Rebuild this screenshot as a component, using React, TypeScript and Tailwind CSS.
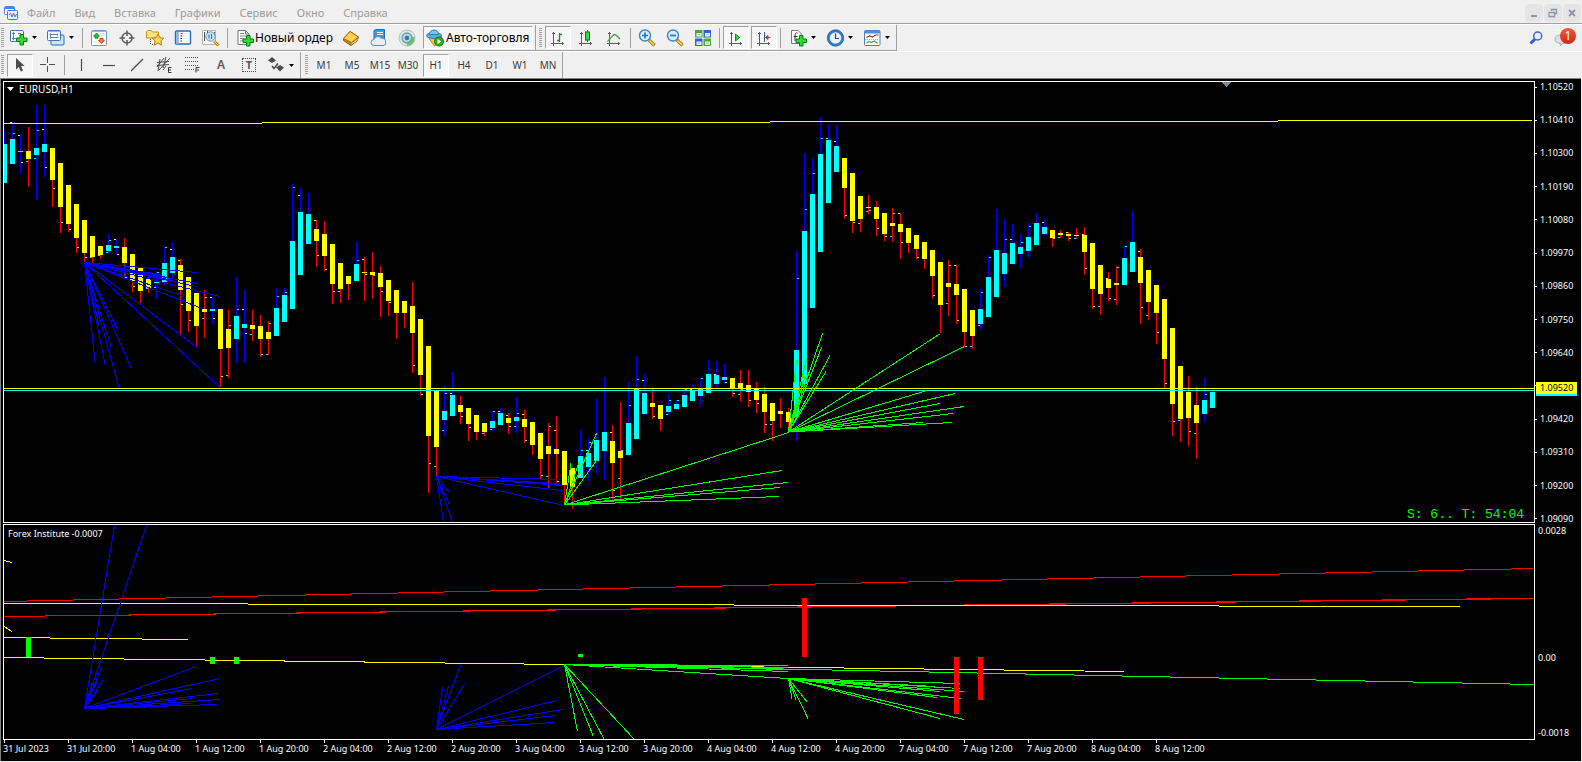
import type { ReactNode } from "react";

const UP = "#00ffff";
const DOWN = "#ffff00";
const BLUE = "#0000ff";
const RED = "#ff0000";
const LIME = "#00ff00";

// Candles, eight units apart: direction, wick top, wick bottom, body top, body bottom
const CANDLES = `
C130,183,144,183 C122,164,139,164 C134,174,151,152 Y127,187,151,159 C105,200,148,155 C105,177,144,152
Y148,207,148,180 Y163,233,163,207 Y185,232,185,224 Y204,253,204,238 Y220,262,220,253 Y236,263,236,257
Y246,259,246,255 C234,253,245,251 C239,255,246,248 Y238,278,247,263 Y254,292,254,281 Y268,303,268,291
Y277,293,279,288 C271,299,282,283 C247,285,263,282 C242,279,257,273 Y259,334,265,290 Y277,332,277,311
Y293,348,293,326 Y290,338,309,312 C297,324,309,311 Y309,387,309,349 Y310,378,329,348 C277,363,316,339
C290,363,324,328 Y310,341,325,329 Y315,357,326,339 Y321,355,332,339 C288,336,308,336 C288,322,295,322
C184,309,241,309 C188,275,212,275 C193,244,214,244 Y220,267,229,241 Y221,271,234,256 Y244,304,244,284
Y263,303,263,289 Y276,300,276,284 C242,281,264,281 Y257,301,272,273 Y252,299,272,275 Y266,317,273,287
Y280,316,280,301 Y290,339,290,313 Y301,328,301,313 Y282,373,306,333 Y319,396,319,375 Y346,493,346,436
Y391,476,391,447 C386,436,411,420 C372,416,395,416 Y396,424,405,412 Y408,441,408,424 Y415,440,415,432
Y423,436,423,432 C411,431,421,428 C408,425,413,425 Y413,434,418,423 C397,433,417,421 Y410,443,419,427
Y422,455,422,445 Y433,479,433,459 Y423,489,446,454 Y416,483,449,454 Y451,505,451,485 Y468,509,468,487
C430,478,456,478 C438,482,453,467 C399,474,440,461 C377,480,432,451 Y425,500,441,463 Y402,499,451,458
C382,456,423,455 C356,439,389,439 C374,415,393,414 Y389,419,403,407 Y405,431,405,419 C394,415,406,412
C400,410,404,409 C389,407,395,407 C384,401,390,401 C378,406,389,396 C360,393,374,393 C361,388,375,384
C364,384,377,380 Y378,397,378,389 Y370,402,383,389 Y370,407,385,392 Y382,413,388,400 Y387,433,394,412
Y403,441,403,421 Y398,428,411,414 Y408,429,412,422 C251,441,350,417 C153,384,231,384 C158,308,194,308
C117,252,154,252 C125,203,140,203 C125,172,146,172 Y158,219,158,188 Y173,233,173,221 Y196,232,196,219
Y195,214,207,208 Y201,236,207,219 Y213,241,213,234 Y208,242,223,226 Y213,259,224,232 Y228,253,228,243
Y235,259,235,249 Y242,269,242,259 Y250,299,250,276 Y262,333,262,305 Y260,316,283,287 Y265,324,284,295
Y289,347,289,332 Y310,349,310,336 C289,330,309,324 C255,317,277,317 C209,297,250,297 C219,287,253,274
C224,264,243,264 C234,268,247,254 C223,258,237,251 C213,245,223,245 C219,236,227,234 Y230,247,230,238
Y230,238,233,235 Y232,241,234,236 Y228,239,235,236 Y227,275,235,252 Y243,309,243,289 Y265,315,265,294
Y272,301,279,288 Y266,305,283,285 C246,285,258,285 C211,272,242,272 Y249,324,257,283 Y270,320,270,302
Y285,344,285,313 Y299,388,299,359 Y328,436,328,404 Y366,442,366,419 Y376,446,392,418 Y387,459,405,423
C378,422,400,414 C389,408,392,408`
  .trim()
  .split(/\s+/)
  .map((s) => ({ up: s[0] === "C", v: s.slice(1).split(",").map(Number) }));

// Open and close ticks: candle index, side, colour, height
const TICKS = `
1RC133 1LY122 2LY135 2RY162 3LC161 4RC130 4LC158 5LY129 5RY167 6RY188 7RY222 8RY229 9RY247 10RY257 11LC257
12LC255 13RC240 13LC252 14LY239 14RY254 15RY277 16RY286 18LC288 19RC272 19LC287 20RC247 21LY249 22LY260
22RY304 23RY320 25RC297 25LC318 26LY297 26RY318 27RY376 28RC325 28LC375 29RC309 30LY309 30RY333 31LC334
32RY354 33RC323 33LC354 34RC296 35RC292 36RC187 37LY195 39LY220 39RY255 40RY269 41RY291 42LC291 44RC260
45LY259 45RY274 46RC275 47RY291 48RY302 51RY365 52RY394 53RY463 54LC466 55RC393 55LC430 56LY393 57RY416
58RY427 60LC433 61RC411 61LC429 62LY411 63LY415 63RY426 64RC413 64LC426 65LY414 65RY440 67RY475 68RC426
68LC476 69LY430 69RY481 72RC450 73LC450 73RC442 76LY432 76RY490 77RC450 77LC478 78RC405 79RC379 80LY380
81RY416 83RC400 83LC414 84RC400 85RC389 86LY389 87RC378 89LY374 90RY382 91RY393 92LC394 92RC389 93RY400
94RY403 95RY424 96LC424 99RC278 100RC209 101RC173 102RC138 103LY138 104LY141 105RY215 106RY222 107LC223
108LC211 108RC210 109RY228 110RY236 111RC213 111LC236 112LY213 112RY242 114RY257 116RY295 118RC265
118LC303 119LY265 119RY320 120RY346 121LC346 122RC292 122LC325 123RC257 125RC239 126LY239 127RC242
128RC226 130LY222 131RY238 132LC237 133LY232 133RY238 134LC238 135LY234 135RY268 136RY306 137LC306
138LY278 138RY298 139RC267 139LC299 140RC246 142LY251 142RY307 143LC315 144RY332 145RY383 146RY421
147LC420 148RY431 149LC433 150RC394`
  .trim()
  .split(/\s+/)
  .map((s) => /^(\d+)([LR])([CY])(\d+)$/.exec(s)!)
  .map((m) => ({ i: +m[1], right: m[2] === "R", up: m[3] === "C", y: +m[4] }));

function Fan({ from, to, color }: { from: [number, number]; to: string; color: string }) {
  const d = to
    .trim()
    .split(/\s+/)
    .map((p) => `M${from[0]} ${from[1]}L${p.replace(",", " ")}`)
    .join("");
  return <path d={d} stroke={color} fill="none" />;
}

function PriceChart() {
  return (
    <svg className="absolute inset-0 h-full w-full" viewBox="4 82 1530 440" preserveAspectRatio="none" shapeRendering="crispEdges" role="img" aria-label="EURUSD H1">
      <path d="M1221 82h10l-5 5z" fill="#778899" />
      {CANDLES.map(({ up, v }, i) => (
        <g key={i}>
          <rect x={4 + i * 8} y={v[0]} width={1} height={v[1] - v[0]} fill={up ? BLUE : RED} />
          <rect x={2 + i * 8} y={v[2]} width={5} height={v[3] - v[2]} fill={up ? UP : DOWN} />
        </g>
      ))}
      {TICKS.map((t, i) => (
        <rect key={i} x={t.i * 8 + (t.right ? 5 : 2)} y={t.y} width={2} height={1} fill={t.up ? UP : DOWN} />
      ))}
      <path d="M4 123.510L1532 120.510" stroke={DOWN} />
      <path d="M4 388.5H1534" stroke={DOWN} />
      <path d="M4 390.5H1534" stroke={UP} />
      <Fan color={BLUE} from={[84.5, 262.5]} to="197,272.5 198,283.5 196,286.5 220,296.5 184,296.5 202,308.5 197,347.5 220,387.5 95,361.5 105,363.5 119,387.5 131,367.5 117.5,329.5 111,346.5 91.5,328.5 99,325.5 165,276.5 173,280.5 160,274.5" />
      <Fan color={BLUE} from={[436.5, 476.5]} to="561,479.5 557,483.5 561,484.5 563,485.5 562,490.5 564,505.5 449.5,492.5 449.5,504.5 443.5,522 452.5,522" />
      <Fan color={LIME} from={[564.5, 505]} to="571,463.5 579,462.5 596.5,433.5 598,458.5 789,432.5 782,470.5 788,482.5 780,487.5 779,496.5" />
      <Fan color={LIME} from={[788.5, 432]} to="822.5,333.5 821.5,347.5 830,355.5 826,371.5 796.5,360.5 806.5,359.5 805,376.5 795,373.5 940.5,333.5 964.5,346.5 927,390.5 955,393.5 940,403.5 964,406.5 953,413.5 952,422.5 923,422.5" />
    </svg>
  );
}

function IndicatorChart() {
  return (
    <svg className="absolute inset-0 h-full w-full" viewBox="4 525 1530 214" preserveAspectRatio="none" shapeRendering="crispEdges" role="img" aria-label="Forex Institute">
      <path d="M4 601.5L1534 568.5M4 616.5L1534 598.2M4 616.5L1534 598.5" stroke={RED} />
      <path d="M4 603.5L1460 606.5M4 637.5L188 639.5M4 657.5L1124 671.5M4 560.5L12 562.5M4 626.5L12 631.5" stroke={DOWN} />
      <Fan color={LIME} from={[564.5, 664.5]} to="1534,684.5 788,665.5 788,667.5 788,669.5 788,671.5 788,678.5 577.5,731.5 593,735.5 604,739 634,739" />
      <Fan color={LIME} from={[788.5, 678.5]} to="960,683.5 960,688.5 964,691.5 935,686.5 940,691.5 961,698.5 937,697.5 940,718.5 964,719.5 792,698.5 796,699.5 807.5,702.5 808,718.5" />
      <Fan color={BLUE} from={[84.5, 708.5]} to="114.5,525.5 146.5,525.5 101.5,667.5 103,680.5 98,679.5 97,691.5 92,683.5 196,666.5 220,678.5 192,688.5 218,693.5 220,699.5 217,704.5 192,698.5 192,703.5 168,706.5" />
      <Fan color={BLUE} from={[436.5, 729.5]} to="460.5,665.5 464.5,683.5 448.5,686.5 442.5,687.5 564,665.5 557,700.5 563,709.5 555,715.5 554,722.5" />
      <path d="M26 637h5v20h-5zM210 657h5v7h-5zM234 657h5v7h-5zM578 654h5v3h-5z" fill={LIME} />
      <path d="M802 598h5v59h-5zM954 657h5v57h-5zM978 657h5v43h-5z" fill={RED} />
    </svg>
  );
}

function Icon({ children, w = 18 }: { children: ReactNode; w?: number }) {
  return (
    <svg width={w} height={18} viewBox={`0 0 ${w} 18`} fill="none" className="shrink-0" aria-hidden="true">
      {children}
    </svg>
  );
}

const Plus = ({ x, y }: { x: number; y: number }) => (
  <path transform={`translate(${x} ${y})`} d="M4 .5h3.500v3.500h3.500v3.500h-3.500v3.500h-3.500v-3.500h-3.500v-3.500h3.500z" fill="#2fdc2f" stroke="#0a7a1c" />
);

const AppIcon = () => (
  <svg width={14} height={14} viewBox="0 0 14 14" fill="none" aria-hidden="true">
    <rect x=".5" y=".5" width="10" height="8" rx="1" fill="#fff" stroke="#4a86e0" />
    <path d="M1 2h9" stroke="#4a86e0" strokeWidth="2" />
    <rect x="3.500" y="4.500" width="10" height="9" rx="1" fill="#eaf3ff" stroke="#3e7be0" />
    <path d="M5 9l1.500-2 1.500 4 1.500-4 1.500 4 1.500-3" stroke="#3e7be0" />
  </svg>
);

const NewChart = () => (
  <Icon>
    <rect x=".5" y="1.500" width="13" height="11" rx="1" fill="#f4f9ff" stroke="#3a78b8" />
    <path d="M3.500 3v8M2 4.500h3M2 9.500h6M8 4.500h3" stroke="#5a84ad" />
    <Plus x={6} y={5} />
  </Icon>
);
const Profiles = () => (
  <Icon>
    <rect x="4" y="6" width="13" height="10" rx="1" fill="#cfe3f5" stroke="#2f6fb0" />
    <rect x=".5" y="1.500" width="13" height="10" rx="1" fill="#f4f9ff" stroke="#3a78b8" />
    <path d="M1 2.500h12" stroke="#8dbbe4" />
    <path d="M3.500 4.500v5M2.500 5.500h8M3.500 8.500h8M10.500 4.500v2" stroke="#5a84ad" />
  </Icon>
);
const MarketWatch = () => (
  <Icon>
    <rect x="1.500" y="1.500" width="15" height="15" rx="1" fill="#fff" stroke="#5b9bd2" />
    <path d="M1.500 2.500h15" stroke="#8dbbe4" />
    <path d="M6.500 4l3 3.200H8v2H5v-2H3.500z" fill="#2ebc2e" stroke="#177e17" strokeWidth=".8" />
    <path d="M11.500 14.500l-3-3.200H10v-2h3v2h1.500z" fill="#f47a4a" stroke="#b8320c" strokeWidth=".8" />
    <path d="M11 4.500h4M11 6.500h4M3 13h4" stroke="#d5dfea" />
  </Icon>
);
const Cross = () => (
  <Icon>
    <circle cx="9" cy="9" r="5" stroke="#5a5a5a" strokeWidth="1.500" />
    <path d="M9 1.500v5.500M9 11v5.500M1.500 9h5.500M11 9h5.500" stroke="#5a5a5a" strokeWidth="1.500" />
  </Icon>
);
const Navigator = () => (
  <Icon>
    <path d="M.5 9V2.500L1.500 1.500h4l1 1.500h6v6z" fill="#fbe384" stroke="#c9961c" />
    <path d="M4.500 10v6M6 15.500h2" stroke="#555" strokeDasharray="1 1" />
    <path d="M12 5l1.800 3.700 4 .5-2.900 2.800.8 4.200-3.700-2.100-3.700 2.100.8-4.200-2.900-2.800 4-.5z" fill="#fcd94c" stroke="#b98113" />
  </Icon>
);
const Terminal = () => (
  <Icon>
    <rect x="1.500" y="2" width="15" height="13" rx="1" fill="#fff" stroke="#2a6ab4" strokeWidth="1.400" />
    <path d="M3.500 3v12" stroke="#7fb2e4" strokeWidth="2.500" />
    <path d="M6.500 4.500h2" stroke="#d03020" />
    <path d="M6.500 7h1.500M6.500 9.500h1.500M6.500 12h1.500" stroke="#222" />
    <path d="M9 4.500h6M9 7h6M9 9.500h6M9 12h6" stroke="#dfeaf8" />
  </Icon>
);
const Tester = () => (
  <Icon>
    <path d="M.5 1.500h13v14H.5z" fill="#fff" stroke="#b5b5b5" />
    <path d="M2.500 3v9M12.500 3v3M5.500 2v3" stroke="#555" />
    <circle cx="8.500" cy="7.500" r="4.700" fill="#b9dbf6" fillOpacity=".85" stroke="#6b9cc4" />
    <path d="M7 5.500v4M9.500 5v5" stroke="#3f76a6" />
    <path d="M12 12l4.500 4.500" stroke="#c8860d" strokeWidth="3" />
    <path d="M12 12l4 4" stroke="#ffdf6b" />
  </Icon>
);
const NewOrder = () => (
  <Icon>
    <path d="M1 1.500h7.500L12 5v10.500H1z" fill="#fff" stroke="#777" />
    <path d="M8.500 1.500V5H12" stroke="#777" />
    <path d="M3 4.500h4M3 7h6M3 9.500h4M3 12h3" stroke="#888" />
    <Plus x={5.500} y={6} />
  </Icon>
);
const Book = () => (
  <Icon>
    <path d="M1.500 9.500l6.500-7 8.500 5.500-1.500 4-6 4.500-7.500-5z" fill="#c58418" stroke="#8a5a0c" />
    <path d="M1.500 9.500L8 2.500l8.500 5.500-7 5.500z" fill="#fbd055" stroke="#a46e10" />
    <path d="M9.500 15l6-4.500" stroke="#fff0b0" />
  </Icon>
);
const Vps = () => (
  <Icon>
    <path d="M4 1.500l2-1h8.500V10H4z" fill="#2ba1f2" stroke="#1273c4" />
    <path d="M7 3.500h6M7 5.500h6" stroke="#e8f6ff" strokeWidth="1.200" />
    <path d="M4 16.500a3 3 0 0 1 0-6 4 4 0 0 1 7.200-1.200 3.300 3.300 0 0 1 4.300 4 2.300 2.300 0 0 1-1.500 3.200z" fill="#e6eef8" stroke="#6a86b0" />
  </Icon>
);
const Signals = () => (
  <Icon>
    <circle cx="9" cy="9" r="8" fill="#dbe8e6" stroke="#a9c8c4" />
    <circle cx="9" cy="9" r="5" fill="#b4d5d8" stroke="#6f9fb5" strokeWidth="1.300" />
    <path d="M9 9v8c4.500 0 8-3.500 7.500-9l-3.500 0c0 3-1 4.500-4 5z" fill="#5fb25f" fillOpacity=".8" />
    <circle cx="9" cy="9" r="2.200" fill="#2b76b8" />
  </Icon>
);
const AutoTrade = () => (
  <Icon>
    <path d="M2 8l6.500 9 7.500-7-1-4z" fill="#f4c93e" stroke="#b5870e" />
    <ellipse cx="8" cy="6.500" rx="7.500" ry="3" fill="#58aede" stroke="#2b7fb0" />
    <path d="M3.500 5.500c0-6 9-6 9 0z" fill="#7cc4ec" stroke="#2b7fb0" />
    <circle cx="13" cy="12.500" r="4.500" fill="#22b422" stroke="#0e7d0e" />
    <path d="M11.500 10l4 2.500-4 2.500z" fill="#fff" />
  </Icon>
);

const Axes = () => (
  <g stroke="#5c5c5c" shapeRendering="crispEdges">
    <path d="M4.500 3v14M2 14.500h13" />
    <path d="M3 4.500h3M13.500 13v3" />
  </g>
);
const BarsIcon = () => (
  <Icon>
    <Axes />
    <path d="M10.500 4v9M8 11.500h2.500M10.500 5.500H13" stroke="#1c8a2a" strokeWidth="1.300" />
  </Icon>
);
const CandlesIcon = () => (
  <Icon>
    <Axes />
    <path d="M10.500 1v12" stroke="#16721f" />
    <rect x="8.500" y="3" width="4" height="8" fill="#3bd83b" stroke="#16721f" />
  </Icon>
);
const LineIcon = () => (
  <Icon>
    <Axes />
    <path d="M2.500 12.500C6 9 8 5.500 9.500 5.500S13 8 15 10" stroke="#4ba04f" strokeWidth="1.300" />
  </Icon>
);
const Magnifier = ({ plus }: { plus?: boolean }) => (
  <Icon>
    <path d="M11 11l5.500 5.500" stroke="#b0780c" strokeWidth="3.400" />
    <path d="M11.500 11.500l4.500 4.500" stroke="#fbd95c" strokeWidth="1.600" />
    <circle cx="7" cy="6.500" r="5.500" fill="#d5edfd" stroke="#3c86c4" strokeWidth="1.400" />
    <path d={plus ? "M4 6.500h6M7 3.500v6" : "M4 6.500h6"} stroke="#2b77b8" strokeWidth="1.700" />
  </Icon>
);
const Tile = () => (
  <Icon>
    <path d="M1 1h7.500v7.500H1z" fill="#4fa82b" />
    <path d="M9.500 1H17v7.500H9.500z" fill="#2e63d6" />
    <path d="M1 9.500h7.500V17H1z" fill="#2e63d6" />
    <path d="M9.500 9.500H17V17H9.500z" fill="#4fa82b" />
    <path d="M2.500 4h5v3.500h-5zM11 4h5v3.500h-5zM2.500 12.500h5V16h-5zM11 12.500h5V16h-5z" fill="#f2f8ff" />
    <path d="M3.500 5.500h3M12 5.500h3M3.500 14h3M12 14h3" stroke="#9cb8dc" />
  </Icon>
);
const ScrollIcon = () => (
  <Icon>
    <Axes />
    <path d="M8.500 5v7l4-3.500z" fill="#3bd83b" stroke="#16862a" />
  </Icon>
);
const ShiftIcon = () => (
  <Icon>
    <Axes />
    <path d="M9.500 3v10" stroke="#2f63a8" />
    <path d="M10.500 8.500l2.500-2v4zM12 8.500h3.500" fill="#c8431a" stroke="#c8431a" />
  </Icon>
);
const Indicators = () => (
  <Icon>
    <path d="M2.500 1.500H9l3 3v10H2.500z" fill="#fff" stroke="#777" />
    <path d="M8.500 4c-2-.8-2.500 1-2.500 3v5M4.500 7.500h4" stroke="#333" />
    <Plus x={6.500} y={6} />
  </Icon>
);
const Clock = () => (
  <Icon>
    <circle cx="9.500" cy="9" r="7" fill="#e9f3fc" stroke="#2a7cd6" strokeWidth="2.400" />
    <circle cx="9.500" cy="9" r="8.200" stroke="#1a4f92" strokeWidth=".7" />
    <path d="M9.500 4.500V9.500H13" stroke="#444" strokeWidth="1.200" />
  </Icon>
);
const Template = () => (
  <Icon>
    <rect x="1.500" y="1.500" width="15.500" height="15" rx="1" fill="#fff" stroke="#4a80be" />
    <path d="M1.500 3h15.500" stroke="#4a90dc" strokeWidth="3" />
    <path d="M3.500 8.500l3-1.500 3 1 3-2h3" stroke="#8c3a2a" strokeWidth="1.200" />
    <path d="M2 10.500h14" stroke="#9ab4d4" strokeDasharray="1 1" />
    <path d="M3.500 14l3-1.500 2 1 3-1.500 3 2.500" stroke="#4ba04f" strokeWidth="1.200" />
  </Icon>
);

const Pointer = () => (
  <Icon>
    <path d="M5 2v11.500l2.800-2.500 2 4.500 2.200-1-2-4.400h3.600z" fill="#4b4b4b" />
  </Icon>
);
const Crosshair = () => (
  <Icon>
    <path d="M8.500 1v6M8.500 10v6M1 8.500h6M10 8.500h6" stroke="#505050" shapeRendering="crispEdges" />
  </Icon>
);
const Stroke = ({ d }: { d: string }) => (
  <Icon>
    <path d={d} stroke="#4b4b4b" strokeWidth="1.200" />
  </Icon>
);
const Channel = () => (
  <Icon>
    <path d="M1 11L8 2M3 14l11-12M7 14l3-4M1 6.500l12-1M1 9.500l12-1M4 3l-2 12M10 1L7 12" stroke="#4b4b4b" />
    <path d="M15.500 11.500h-3v5h3M12.500 14h2.500" stroke="#333" />
  </Icon>
);
const Fib = () => (
  <Icon>
    <path d="M1 1.500h14M1 5.500h14M1 9.500h14M1 13.500h9" stroke="#4b4b4b" strokeDasharray="1 1" />
    <path d="M15.500 11.500h-3.500v5M12.500 14h2.500" stroke="#333" />
  </Icon>
);
const Shapes = () => (
  <Icon>
    <path d="M5 1l4 3.500-4 2.500-4-2.500zM13 9l4 2.500-4 4-4-4z" fill="#4b4b4b" />
    <path d="M5 10l2 2.500 4-5" stroke="#4b4b4b" strokeWidth="1.500" />
  </Icon>
);

const PRESSED =
  "border-t-[#a0a0a0] border-l-[#a0a0a0] border-r-white border-b-white bg-[#f7f7f7]";

function Tool({ label, children, pressed = false }: { label: string; children: ReactNode; pressed?: boolean }) {
  return (
    <button
      type="button"
      aria-label={label}
      aria-pressed={pressed}
      className={`mx-px flex h-[23px] w-[26px] shrink-0 items-center justify-center border ${pressed ? PRESSED : "border-transparent"}`}
    >
      {children}
    </button>
  );
}

function MenuTool({ label, children }: { label: string; children: ReactNode }) {
  return (
    <button type="button" aria-label={label} aria-haspopup="menu" className="flex h-[23px] w-[37px] shrink-0 items-center gap-1 pl-1">
      {children}
      <svg width="5" height="3" viewBox="0 0 5 3" aria-hidden="true">
        <path d="M0 0h5L2.500 3z" fill="#000" />
      </svg>
    </button>
  );
}

const Sep = () => <div className="mx-[2px] h-5 w-px shrink-0 bg-[#a0a0a0]" />;
const End = () => <div className="h-full w-px shrink-0 bg-[#a0a0a0]" />;
const Grip = () => (
  <div className="mx-[2px] ml-px h-5 w-[3px] shrink-0 bg-[repeating-linear-gradient(to_bottom,#a0a0a0_0_1px,transparent_1px_2px)]" />
);

const MENU = ["Файл", "Вид", "Вставка", "Графики", "Сервис", "Окно", "Справка"];
const FRAMES = ["M1", "M5", "M15", "M30", "H1", "H4", "D1", "W1", "MN"];
const PRICES = ["1.10520", "1.10410", "1.10300", "1.10190", "1.10080", "1.09970", "1.09860", "1.09750", "1.09640", "", "1.09420", "1.09310", "1.09200", "1.09090"];
const TIMES = [
  "31 Jul 2023", "31 Jul 20:00", "1 Aug 04:00", "1 Aug 12:00", "1 Aug 20:00", "2 Aug 04:00", "2 Aug 12:00",
  "2 Aug 20:00", "3 Aug 04:00", "3 Aug 12:00", "3 Aug 20:00", "4 Aug 04:00", "4 Aug 12:00", "4 Aug 20:00",
  "7 Aug 04:00", "7 Aug 12:00", "7 Aug 20:00", "8 Aug 04:00", "8 Aug 12:00",
];

function ScaleLabel({ text }: { text: string }) {
  return (
    <div className="flex h-3 items-center gap-[3px] leading-3">
      <span className="h-px w-[2px] bg-white" />
      {text}
    </div>
  );
}

function WindowButton({ label, children }: { label: string; children: ReactNode }) {
  return (
    <button type="button" aria-label={label} className="flex h-[18px] w-[18px] items-center justify-center rounded-sm bg-[#e5e5e5]">
      <svg width="10" height="10" viewBox="0 0 10 10" fill="none" stroke="#8797a8" strokeWidth="2" aria-hidden="true">
        {children}
      </svg>
    </button>
  );
}

export default function App() {
  return (
    <div className="flex min-h-screen flex-col bg-[#f0f0f0] font-['Noto_Sans','Open_Sans',sans-serif] text-black">
      <header className="flex h-6 items-center justify-between border-b border-[#a0a0a0] pt-[3px]">
        <nav className="flex items-center pl-1 text-[11px] text-[#9b9b9b]">
          <AppIcon />
          <div className="flex gap-[19px] pl-[9px]">
            {MENU.map((m) => (
              <button key={m} type="button">
                {m}
              </button>
            ))}
          </div>
        </nav>
        <div className="flex gap-px pr-px">
          <WindowButton label="Свернуть">
            <path d="M2 8h6" />
          </WindowButton>
          <WindowButton label="Восстановить">
            <path d="M3.500 3V1.500h5v4H7M1 4.500h5.500v4H1z" strokeWidth="1.300" />
          </WindowButton>
          <WindowButton label="Закрыть">
            <path d="M2 2l6 6M8 2l-6 6" />
          </WindowButton>
        </div>
      </header>

      <div className="flex justify-between">
        <div className="flex h-[27px] items-center border-t border-b border-t-white border-b-[#a0a0a0] text-[12px]">
          <Grip />
          <MenuTool label="Новый график"><NewChart /></MenuTool>
          <MenuTool label="Профили"><Profiles /></MenuTool>
          <Sep />
          <Tool label="Обзор рынка"><MarketWatch /></Tool>
          <Tool label="Окно данных"><Cross /></Tool>
          <Tool label="Навигатор"><Navigator /></Tool>
          <Tool label="Терминал"><Terminal /></Tool>
          <Tool label="Тестер стратегий"><Tester /></Tool>
          <Sep />
          <button type="button" className="flex w-[107px] shrink-0 items-center pl-[7px] whitespace-nowrap">
            <NewOrder />
            Новый ордер
          </button>
          <Tool label="Маркет"><Book /></Tool>
          <Tool label="Хостинг"><Vps /></Tool>
          <Tool label="Сигналы"><Signals /></Tool>
          <button type="button" aria-pressed="true" className={`mx-[2px] flex h-[23px] w-[110px] shrink-0 items-center gap-[2px] border pl-[2px] whitespace-nowrap ${PRESSED}`}>
            <AutoTrade />
            Авто-торговля
          </button>
          <div className="mr-[2px] h-full w-px shrink-0 bg-[#a0a0a0]" />
          <Grip />
          <Tool label="Бары" pressed><BarsIcon /></Tool>
          <Tool label="Свечи"><CandlesIcon /></Tool>
          <Tool label="Линия"><LineIcon /></Tool>
          <Sep />
          <Tool label="Увеличить"><Magnifier plus /></Tool>
          <Tool label="Уменьшить"><Magnifier /></Tool>
          <Tool label="Упорядочить окна"><Tile /></Tool>
          <Sep />
          <Tool label="Автопрокрутка" pressed><ScrollIcon /></Tool>
          <Tool label="Сдвиг графика" pressed><ShiftIcon /></Tool>
          <Sep />
          <div className="flex pl-[2px]">
            <MenuTool label="Индикаторы"><Indicators /></MenuTool>
            <MenuTool label="Периоды"><Clock /></MenuTool>
            <MenuTool label="Шаблоны"><Template /></MenuTool>
          </div>
          <End />
        </div>
        <div className="flex grow items-center justify-end gap-[11px] border-t border-white pr-[6px]">
          <button type="button" aria-label="Поиск">
            <svg width="14" height="14" viewBox="0 0 14 14" fill="none" aria-hidden="true">
              <path d="M6 8L1.500 12.500" stroke="#2f5fd0" strokeWidth="3" />
              <circle cx="8.700" cy="5" r="4" fill="#eef4ff" stroke="#3565d6" strokeWidth="1.500" />
            </svg>
          </button>
          <button type="button" aria-label="Уведомления" className="flex">
            <svg width="14" height="14" viewBox="0 0 14 14" className="mt-[6px] -mr-2" aria-hidden="true">
              <path d="M7 1c4 0 7 1.500 7 4.500S11 9 8 9.500L6.500 12 6 9C2 9 1 7.500 1 5s2-4 6-4z" fill="#dcdee2" stroke="#a9abb0" />
            </svg>
            <span className="flex h-4 w-4 items-center justify-center rounded-full bg-linear-to-b from-[#f2593c] to-[#cc2713] text-xs leading-none text-white">1</span>
          </button>
        </div>
      </div>

      <div className="flex h-[27px] items-center border-t border-white text-[10px] text-[#3c3c3c]">
        <Grip />
        <Tool label="Курсор" pressed><Pointer /></Tool>
        <Tool label="Перекрестие"><Crosshair /></Tool>
        <Sep />
        <Tool label="Вертикальная линия"><Stroke d="M9.500 3v12" /></Tool>
        <Tool label="Горизонтальная линия"><Stroke d="M3 9.500h12" /></Tool>
        <Tool label="Трендовая линия"><Stroke d="M3 15L15 3" /></Tool>
        <Tool label="Канал"><Channel /></Tool>
        <Tool label="Фибоначчи"><Fib /></Tool>
        <Tool label="Текст"><span className="text-[12px] font-semibold text-[#5b5b5b]">A</span></Tool>
        <Tool label="Метка">
          <span className="flex h-[14px] w-[14px] items-center justify-center border border-dotted border-[#4b4b4b] text-[11px] font-bold text-[#5b5b5b]">T</span>
        </Tool>
        <MenuTool label="Стрелки"><Shapes /></MenuTool>
        <End />
        <div className="w-[3px] shrink-0" />
        <Grip />
        {FRAMES.map((f) => (
          <Tool key={f} label={f} pressed={f === "H1"}>{f}</Tool>
        ))}
        <End />
      </div>

      <main className="mr-px mb-px flex grow flex-col border-t border-l border-[#808080] bg-black pt-[2px] pr-px pl-[2px] text-[9px] text-white">
        <section className="flex h-[442px]">
          <div className="relative grow border border-white">
            <PriceChart />
            <div className="relative flex items-center gap-[5px] pl-[3px] text-[10px] leading-[14px]">
              <svg width="7" height="4" viewBox="0 0 7 4" aria-hidden="true">
                <path d="M0 0h7L3.500 4z" fill="#fff" />
              </svg>
              EURUSD,H1
            </div>
            <div className="absolute right-[10px] bottom-0 font-['Liberation_Mono',monospace] text-[13px] leading-[14px] whitespace-pre text-[#00ff00]">
              S: 6.. T: 54:04
            </div>
          </div>
          <div className="relative -mb-[2px] flex w-[45px] flex-col justify-between">
            {PRICES.map((p, i) => (
              <ScaleLabel key={i} text={p} />
            ))}
            <div className="absolute top-[301px] left-px flex h-[14px] w-[41px] items-center border-b-2 border-[#00ffff] bg-[#ffff00] pl-1 leading-3 text-black">
              1.09520
            </div>
          </div>
        </section>
        <section className="mt-px flex h-[216px]">
          <div className="relative grow border border-white">
            <IndicatorChart />
            <div className="relative pt-[2px] pl-1 leading-[14px]">Forex Institute -0.0007</div>
          </div>
          <div className="flex w-[45px] flex-col justify-between py-px pl-[3px] leading-3">
            <div>0.0028</div>
            <div className="pt-[52px]">0.00</div>
            <div>-0.0018</div>
          </div>
        </section>
        <div className="flex h-5 overflow-hidden pl-px">
          {TIMES.map((t) => (
            <div key={t} className="w-16 shrink-0 whitespace-nowrap">
              <div className="h-[3px] w-px bg-white" />
              <div className="-ml-px leading-3">{t}</div>
            </div>
          ))}
        </div>
      </main>
    </div>
  );
}
